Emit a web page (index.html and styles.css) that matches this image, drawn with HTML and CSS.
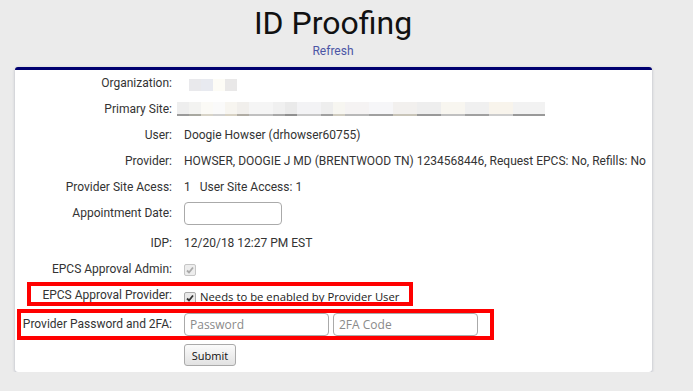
FILE: index.html
```html
<!doctype html>
<html lang="en">
<head>
    <meta charset="UTF-8">
    <meta name="viewport" content="width=device-width, initial-scale=1.0">
    <title>ID Proofing</title>
    <link rel="stylesheet" href="styles.css">
</head>
<body>
    <div id="header">
        <h1>ID Proofing</h1>
        <a href="#" class="refresh">Refresh</a>
    </div>

    <div id="card">
        <div class="row">
            <div class="label">Organization:</div>
            <div class="value"><span class="blur blur_org"></span></div>
        </div>
        <div class="row">
            <div class="label">Primary Site:</div>
            <div class="value"><span class="blur blur_site"></span></div>
        </div>
        <div class="row">
            <div class="label">User:</div>
            <div class="value">Doogie Howser (drhowser60755)</div>
        </div>
        <div class="row">
            <div class="label">Provider:</div>
            <div class="value">HOWSER, DOOGIE J MD (BRENTWOOD TN) 1234568446, Request EPCS: No, Refills: No</div>
        </div>
        <div class="row">
            <div class="label">Provider Site Acess:</div>
            <div class="value">1 &nbsp; User Site Access: 1</div>
        </div>
        <div class="row row_appt">
            <div class="label">Appointment Date:</div>
            <div class="value"><input type="text" class="field field_date"></div>
        </div>
        <div class="row">
            <div class="label">IDP:</div>
            <div class="value">12/20/18 12:27 PM EST</div>
        </div>
        <div class="row">
            <div class="label">EPCS Approval Admin:</div>
            <div class="value">
                <span class="check check_disabled">
                    <svg width="8" height="8" viewBox="0 0 8 8"><path d="M1 4.5 L3 6.5 L7 1.5" fill="none" stroke="#a9a9a9" stroke-width="1.8"/></svg>
                </span>
            </div>
        </div>
        <div class="row">
            <div class="label">EPCS Approval Provider:</div>
            <div class="value">
                <span class="check check_provider">
                    <svg width="8" height="8" viewBox="0 0 8 8"><path d="M1 4.5 L3 6.5 L7 1.5" fill="none" stroke="#333" stroke-width="1.8"/></svg>
                </span>
                <span class="note">Needs to be enabled by Provider User</span>
            </div>
        </div>
        <div class="row row_pass">
            <div class="label">Provider Password and 2FA:</div>
            <div class="value">
                <input type="password" class="field field_pass" placeholder="Password">
                <input type="text" class="field field_pass" placeholder="2FA Code">
            </div>
        </div>
        <div class="row row_submit">
            <div class="label"></div>
            <div class="value"><button type="submit" class="submit">Submit</button></div>
        </div>

        <!-- annotation boxes drawn over the form -->
        <div class="mark mark_provider"></div>
        <div class="mark mark_pass"></div>
    </div>
</body>
</html>
```

FILE: styles.css
```css
body {
    font-family: Roboto, 'Liberation Sans', sans-serif;
    margin: 0;
    padding: 0;
    background: #ebebeb;
    color: #333;
}

#header {
    text-align: center;
    padding-top: 3px;
    margin-left: -27px;
}

h1 {
    margin: 0;
    font-size: 32px;
    font-weight: 400;
    line-height: 40px;
    color: #111;
}

.refresh {
    display: block;
    font-size: 12px;
    line-height: 16px;
    color: #4b55a5;
    text-decoration: none;
}

#card {
    position: relative;
    margin: 8px 41px 0 15px;
    padding-bottom: 6px;
    background: #fff;
    border-top: 3px solid #000070;
    border-radius: 3px;
    box-shadow: 0 1px 3px rgba(40, 50, 90, 0.3);
}

.row {
    display: grid;
    grid-template-columns: 157px 1fr;
    column-gap: 12px;
    align-items: center;
    height: 26px;
    font-size: 12px;
}

.label {
    text-align: right;
    white-space: nowrap;
}

.value {
    display: flex;
    align-items: center;
    white-space: nowrap;
}

.row_appt {
    box-sizing: border-box;
    height: 30px;
    padding: 1px 0 5px;
}

.row_pass {
    height: 32px;
}

.row_submit {
    height: auto;
    padding-top: 4px;
}

.blur {
    display: block;
    height: 12px;
}

.blur_org {
    width: 48px;
    margin: 4px 0 0 5px;
    background: linear-gradient(to right, #e9e9ec 0 12px, #e8eaf0 12px 24px, #fdfcf6 24px 36px, #e9e8e8 36px 48px);
}

.blur_site {
    width: 368px;
    height: 14px;
    margin: 0 0 0 -7px;
    background:
        linear-gradient(to right, #9a9a9a 0 12px, #a8a8a0 12px 24px, #d8d4c8 24px 36px, #d0d0d0 36px 48px, #d8d2c4 48px 60px, #b0aca4 60px 72px, #c0c0c0 72px 96px, #a8a8a8 96px 108px, #909090 108px 120px, #c8c8c8 120px 144px, #a0a0a0 144px 156px, #d0ccc0 156px 168px, #b8b8b8 168px 192px, #a0a0a0 192px 216px, #c8c4b8 216px 240px, #999 240px 264px, #c0c0c0 264px 288px, #a0a0a0 288px 312px, #ccc 312px 336px, #999 336px 368px) bottom / 100% 2px no-repeat,
        linear-gradient(to right, #eeeeee 0 12px, #f3f3f1 12px 24px, #fbfaf6 24px 36px, #fafafa 36px 48px, #f7f5f0 48px 60px, #f1efec 60px 72px, #f5f5f5 72px 96px, #f0f0f0 96px 108px, #eaeaea 108px 120px, #f3f3f5 120px 144px, #eeeeee 144px 156px, #f7f6f1 156px 168px, #f5f3f3 168px 192px, #f6f6f8 192px 216px, #f2f0ee 216px 240px, #eeeeee 240px 264px, #f8f6f0 264px 288px, #f0f0f0 288px 312px, #f8f4ec 312px 336px, #f2f2f2 336px 368px);
}

.field {
    box-sizing: border-box;
    height: 23px;
    margin: 0;
    padding: 0 5px;
    font-family: 'Open Sans', sans-serif;
    font-size: 12px;
    color: #333;
    background: #fff;
    border: 1px solid #aaa;
    border-radius: 4px;
    outline: none;
}

.field::placeholder {
    color: #8a8a8a;
}

.field_date {
    width: 98px;
}

.field_pass {
    width: 145px;
    margin-right: 4px;
}

.check {
    box-sizing: border-box;
    display: flex;
    align-items: center;
    justify-content: center;
    width: 12px;
    height: 12px;
    border: 1px solid #c6c6c6;
    border-radius: 2px;
}

.check_disabled {
    background: #ededed;
    margin-top: 1px;
}

.check_provider {
    background: #e9e9e9;
    border-color: #aaa;
    margin-top: 6px;
}

.note {
    margin-left: 4px;
    margin-top: 2px;
    font-family: 'Open Sans', sans-serif;
    font-size: 11.3px;
    color: #222;
}

.submit {
    box-sizing: border-box;
    width: 52px;
    height: 22px;
    padding: 0;
    font-family: 'Open Sans', sans-serif;
    font-size: 11px;
    color: #111;
    background: linear-gradient(#fbfbfb, #e2e2e2);
    border: 1px solid #aaa;
    border-radius: 3px;
    cursor: pointer;
}

.mark {
    position: absolute;
    box-sizing: border-box;
    border: 4px solid #ff0000;
}

.mark_provider {
    left: 12px;
    top: 212px;
    width: 386px;
    height: 24px;
}

.mark_pass {
    left: 2px;
    top: 239px;
    width: 477px;
    height: 31px;
}
```
